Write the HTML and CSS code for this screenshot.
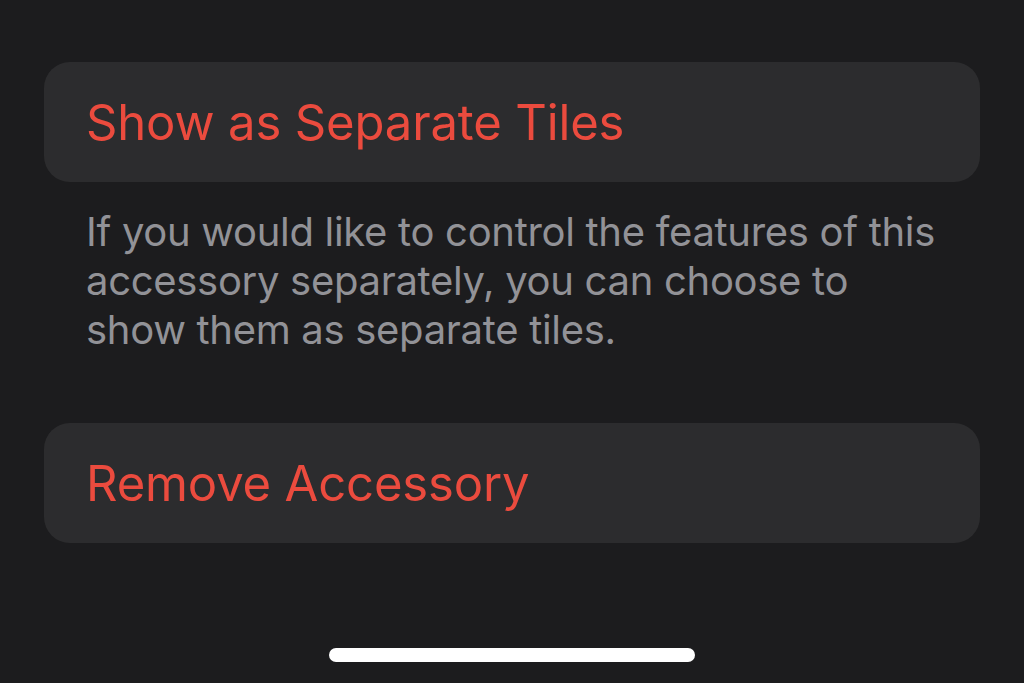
FILE: index.html
```html
<!DOCTYPE html>
<html>
<head>
<meta charset="utf-8">
<link rel="stylesheet" href="styles.css">
</head>
<body>
<div class="screen">
  <div class="card"><span class="action">Show as Separate Tiles</span></div>
  <p class="footer">If you would like to control the features of this accessory separately, you can choose to show them as separate tiles.</p>
  <div class="card card-remove"><span class="action">Remove Accessory</span></div>
  <div class="home-indicator"></div>
</div>
</body>
</html>
```
FILE: styles.css
```css
html, body {
  margin: 0;
  padding: 0;
  background: #1c1c1e;
}
.screen {
  width: 1024px;
  height: 683px;
  box-sizing: border-box;
  padding: 62px 44px 0 44px;
  display: flex;
  flex-direction: column;
  font-family: Inter, "Noto Sans", sans-serif;
  overflow: hidden;
}
.card {
  height: 120px;
  background: #2c2c2e;
  border-radius: 26px;
  display: flex;
  align-items: center;
  padding-left: 42px;
  flex-shrink: 0;
}
.action {
  color: #eb4b3e;
  font-size: 49px;
  letter-spacing: -0.15px;
}
.footer {
  margin: 25px 0 0 0;
  padding: 0 40px 0 42px;
  color: #929297;
  font-size: 40px;
  line-height: 49px;
  letter-spacing: -0.3px;
}
.card-remove {
  margin-top: 69px;
}
.home-indicator {
  margin-top: auto;
  margin-bottom: 21px;
  align-self: center;
  width: 366px;
  height: 14px;
  border-radius: 7px;
  background: #ffffff;
}
```
